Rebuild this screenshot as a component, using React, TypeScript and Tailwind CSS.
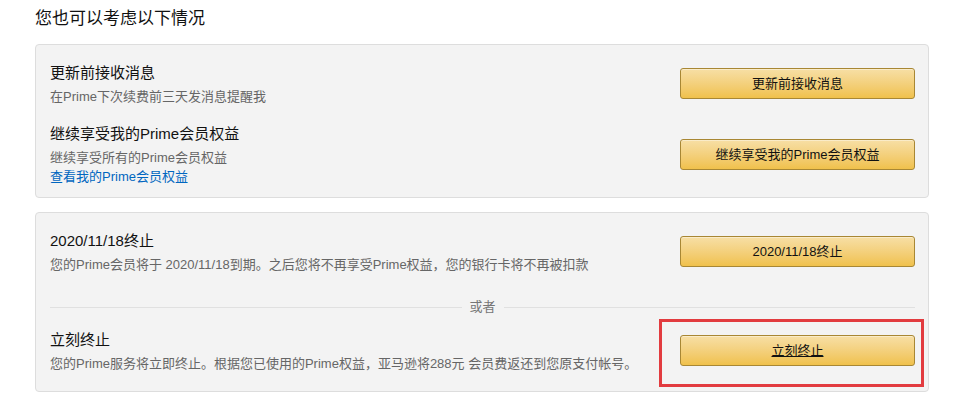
const FONT = "font-['Liberation_Sans','Noto_Sans_CJK_SC',sans-serif]";

// Amazon-style yellow action button
function ActionButton({ label, hover = false }: { label: string; hover?: boolean }) {
  return (
    <button
      type="button"
      className={
        "w-[235px] h-[31px] rounded-[3px] border border-[#a88734] bg-gradient-to-b from-[#f7dfa5] to-[#f0c14b] text-[13px] leading-[29px] text-[#111] shadow-[inset_0_1px_0_rgba(255,255,255,0.4)] " +
        (hover ? "underline" : "")
      }
    >
      {label}
    </button>
  );
}

function Option({
  title,
  desc,
  link,
  button,
  hover,
  highlight,
}: {
  title: string;
  desc: string;
  link?: string;
  button: string;
  hover?: boolean;
  highlight?: boolean;
}) {
  return (
    <div className="flex items-center justify-between">
      <div className="flex flex-col">
        <span className="text-[15px] leading-[24px] text-[#111]">{title}</span>
        <span className="mt-0.5 text-[13px] leading-[19px] text-[#666]">{desc}</span>
        {link && <a className="text-[13px] leading-[19px] text-[#0066c0]">{link}</a>}
      </div>
      <div className="relative">
        <ActionButton label={button} hover={hover} />
        {highlight && (
          <div className="absolute left-[-21px] right-[-9px] top-[-16px] bottom-[-21px] border-[3px] border-[#e23b3f]" />
        )}
      </div>
    </div>
  );
}

export default function App() {
  return (
    <div className={`${FONT} bg-white w-[955px] h-[409px] pl-[35px] pt-[7px]`}>
      <h2 className="text-[17px] leading-[24px] text-[#111] font-normal">您也可以考虑以下情况</h2>

      <div className="mt-[13px] w-[894px] rounded-[4px] border border-[#ddd] bg-[#f3f3f3] pl-[14px] pr-[13px] pt-[16px] pb-[11px]">
        <Option title="更新前接收消息" desc="在Prime下次续费前三天发消息提醒我" button="更新前接收消息" />
        <div className="mt-[16px]">
          <Option
            title="继续享受我的Prime会员权益"
            desc="继续享受所有的Prime会员权益"
            link="查看我的Prime会员权益"
            button="继续享受我的Prime会员权益"
          />
        </div>
      </div>

      <div className="mt-[14px] w-[894px] rounded-[4px] border border-[#ddd] bg-[#f3f3f3] pl-[14px] pr-[13px] pt-[16px] pb-[18px]">
        <Option
          title="2020/11/18终止"
          desc="您的Prime会员将于 2020/11/18到期。之后您将不再享受Prime权益，您的银行卡将不再被扣款"
          button="2020/11/18终止"
        />
        <div className="mt-[23px] mb-[11px] flex h-[20px] items-center">
          <div className="h-px flex-1 bg-[#e0e0e0]" />
          <span className="px-2 text-[13px] leading-[20px] text-[#767676]">或者</span>
          <div className="h-px flex-1 bg-[#e0e0e0]" />
        </div>
        <Option
          title="立刻终止"
          desc="您的Prime服务将立即终止。根据您已使用的Prime权益，亚马逊将288元 会员费返还到您原支付帐号。"
          button="立刻终止"
          hover
          highlight
        />
      </div>
    </div>
  );
}
